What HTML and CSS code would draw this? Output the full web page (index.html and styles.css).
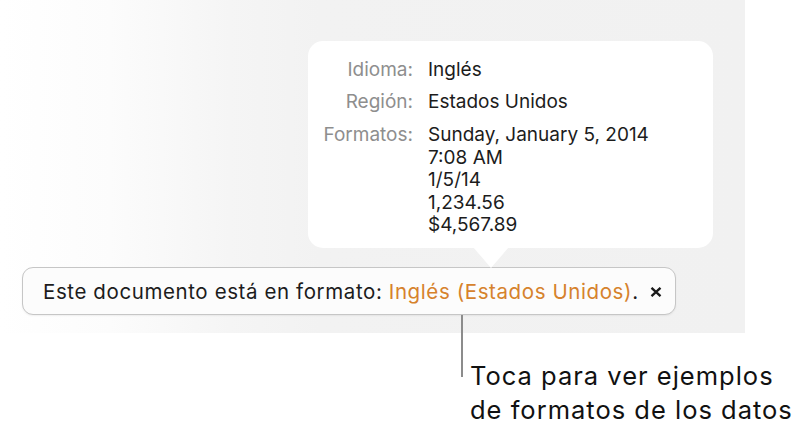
FILE: index.html
```html
<!DOCTYPE html>
<html lang="es">
<head>
<meta charset="utf-8">
<title>Formato del documento</title>
<link rel="stylesheet" href="styles.css">
</head>
<body>
<div class="stage">
  <div class="canvas">
    <div class="popover">
      <div class="grid">
        <div class="label">Idioma:</div>
        <div class="value">Inglés</div>
        <div class="label r2">Región:</div>
        <div class="value r2">Estados Unidos</div>
        <div class="label r3">Formatos:</div>
        <div class="value r3">Sunday, January 5, 2014<br>7:08 AM<br>1/5/14<br>1,234.56<br>$4,567.89</div>
      </div>
      <div class="arrow"></div>
    </div>
    <div class="banner">
      <span class="msg">Este documento está en formato: <span class="link">Inglés (Estados Unidos)</span>.</span>
      <svg class="close" width="12" height="10" viewBox="0 0 12 10"><path d="M1.5 0.8 L10.5 9.2 M10.5 0.8 L1.5 9.2" stroke="#1a1a1a" stroke-width="2.3" stroke-linecap="butt" fill="none"/></svg>
    </div>
  </div>
  <div class="callout">
    <div class="leader"></div>
    <div class="callout-text">Toca para ver ejemplos<br>de formatos de los datos</div>
  </div>
</div>
</body>
</html>
```
FILE: styles.css
```css
* { box-sizing: border-box; }
html, body { margin: 0; padding: 0; background: #ffffff; }
body { font-family: Inter, "Noto Sans", "Liberation Sans", sans-serif; }
.stage { width: 811px; height: 431px; overflow: hidden; }
.canvas {
  position: relative;
  width: 745px;
  height: 333px;
  padding: 267px 0 0 22px;
  background: linear-gradient(to right, #ffffff 0px, #fcfcfc 110px, #f5f5f5 230px, #f2f2f2 320px, #f1f1f1 745px);
}
.popover {
  position: absolute;
  left: 308px;
  top: 41px;
  width: 405px;
  height: 207px;
  background: #ffffff;
  border-radius: 15px;
  padding-top: 18px;
  z-index: 2;
}
.grid {
  display: grid;
  grid-template-columns: 105px 1fr;
  column-gap: 15px;
  font-size: 19px;
  line-height: 22.5px;
}
.label { text-align: right; color: #8e8e8e; }
.value { color: #1c1c1c; }
.r2 { margin-top: 9px; }
.r3 { margin-top: 11px; }
.arrow {
  position: absolute;
  left: 165px;
  top: 206px;
  width: 0;
  height: 0;
  border-left: 18px solid transparent;
  border-right: 18px solid transparent;
  border-top: 21px solid #ffffff;
}
.banner {
  display: flex;
  align-items: center;
  width: 654px;
  height: 48px;
  padding-left: 20px;
  border: 1px solid #c6c6c6;
  border-radius: 11px;
  background: #fcfcfc;
  box-shadow: 0 1px 2px rgba(0,0,0,0.06);
  font-size: 20.5px;
  letter-spacing: 0.6px;
  color: #1c1c1c;
}
.link { color: #d6822c; }
.close { margin-left: 11px; margin-top: 1px; }
.callout {
  position: relative;
  display: flex;
  margin: -18px 0 0 461px;
}
.leader { width: 2px; height: 62px; background: #8c8c8c; }
.callout-text {
  margin-left: 7px;
  margin-top: 44px;
  font-size: 25.5px;
  letter-spacing: 1px;
  line-height: 34px;
  color: #111111;
}
```
